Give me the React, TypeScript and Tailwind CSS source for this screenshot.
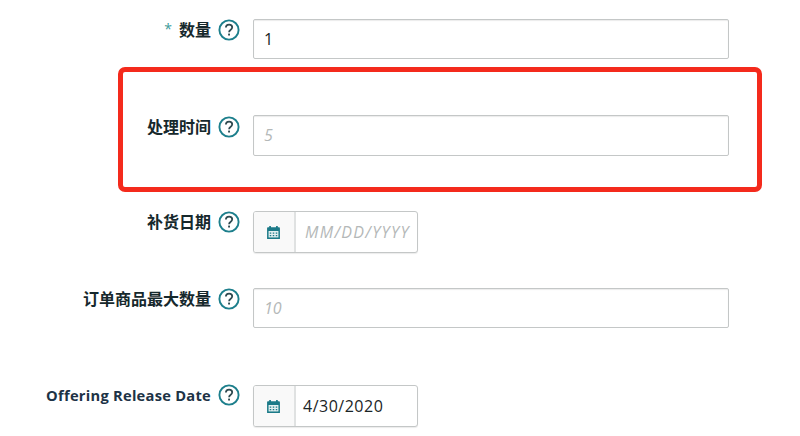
import React from "react";

const font = { fontFamily: '"Open Sans","Noto Sans CJK SC",sans-serif' };

function Help() {
  return (
    <svg width="22" height="22" viewBox="0 0 22 22" fill="none" className="shrink-0">
      <circle cx="11" cy="11" r="9.6" stroke="#1d7f8c" strokeWidth="1.9" />
      <path d="M7.9 8.6c0-1.9 1.4-3 3.2-3 1.8 0 3.1 1.1 3.1 2.7 0 1.3-.8 2-1.7 2.6-.9.6-1.4 1.1-1.4 2.3" stroke="#2f4a50" strokeWidth="1.8" />
      <rect x="10.1" y="14.6" width="1.9" height="1.9" fill="#2f4a50" />
    </svg>
  );
}

function Calendar() {
  return (
    <svg width="15" height="15" viewBox="0 0 14 14" className="shrink-0 mr-[2px]">
      <path d="M1 3.2c0-.6.4-1 1-1h1V1h1.6v1.2h4.8V1H11v1.2h1c.6 0 1 .4 1 1V13H1z" fill="#1b7a88" />
      <rect x="2.4" y="5.6" width="9.2" height="6" fill="#e4f0f1" />
      <path d="M3.5 7h1.4v1.2H3.5zM6.3 7h1.4v1.2H6.3zM9.1 7h1.4v1.2H9.1zM3.5 9.4h1.4v1.2H3.5zM6.3 9.4h1.4v1.2H6.3zM9.1 9.4h1.4v1.2H9.1z" fill="#1b7a88" />
    </svg>
  );
}

function Label({ children, cjk = true, star = false }: { children: React.ReactNode; cjk?: boolean; star?: boolean }) {
  return (
    <div className="w-[211px] flex justify-end items-center shrink-0 h-[22px]">
      {star && <span className="text-[14px] text-[#3c9a9a] mr-[7px] mt-[-3px]">*</span>}
      <span className={cjk ? "text-[16px] font-bold text-[#16282c] whitespace-nowrap" : "text-[14.7px] font-bold tracking-[0.25px] text-[#1d3346] whitespace-nowrap"}>
        {children}
      </span>
    </div>
  );
}

function TextInput({ value, placeholder, tall = false }: { value?: string; placeholder?: string; tall?: boolean }) {
  return (
    <div className={`w-[476px] ${tall ? "h-[41px]" : "h-[40px]"} border border-[#c4c7c7] rounded-[2px] bg-white flex items-center px-[10px] shadow-[inset_0_1px_1px_rgba(0,0,0,0.08)]`}>
      {value ? (
        <span className="text-[16px] text-[#1a2426]">{value}</span>
      ) : (
        <span className="text-[16px] italic text-[#b4b8b8] mt-[-1px]">{placeholder}</span>
      )}
    </div>
  );
}

function DateInput({ value, placeholder }: { value?: string; placeholder?: string }) {
  return (
    <div className="w-[165px] h-[42px] border border-[#c4c7c7] rounded-[3px] bg-white flex items-stretch overflow-hidden shadow-[0_1px_1px_rgba(0,0,0,0.08)]">
      <div className="w-[42px] bg-[#f9f9f9] border-r-2 border-[#e0e2e2] flex items-center justify-center shrink-0">
        <Calendar />
      </div>
      {value ? (
        <span className="flex items-center pl-[7px] text-[16px] tracking-[0.5px] text-[#1a2426] whitespace-nowrap">{value}</span>
      ) : (
        <span className="flex items-center pl-[9px] text-[16px] tracking-[1.3px] italic text-[#b4b8b8] whitespace-nowrap">{placeholder}</span>
      )}
    </div>
  );
}

function Row({ label, className, offset, children }: { label: React.ReactNode; className?: string; offset?: string; children: React.ReactNode }) {
  return (
    <div className={`flex items-start ${className ?? ""}`}>
      <div className={`flex shrink-0 ${offset ?? ""}`}>
        {label}
        <div className="ml-[7px] mr-[13px] shrink-0"><Help /></div>
      </div>
      {children}
    </div>
  );
}

export default function App() {
  return (
    <div className="relative w-[800px] h-[436px] bg-white overflow-hidden" style={font}>
      <div className="pt-[19px]">
        <Row label={<Label star>数量</Label>}>
          <TextInput value="1" />
        </Row>
        <Row label={<Label>处理时间</Label>} className="mt-[56px]" offset="mt-[1px]">
          <TextInput placeholder="5" tall />
        </Row>
        <Row label={<Label>补货日期</Label>} className="mt-[55px]">
          <DateInput placeholder="MM/DD/YYYY" />
        </Row>
        <Row label={<Label>订单商品最大数量</Label>} className="mt-[35px]">
          <TextInput placeholder="10" />
        </Row>
        <Row label={<Label cjk={false}>Offering Release Date</Label>} className="mt-[57px]" offset="mt-[-1px]">
          <DateInput value="4/30/2020" />
        </Row>
      </div>
      <div className="absolute left-[118px] top-[67px] w-[644px] h-[125px] border-[5px] border-[#f42a1c] rounded-[7px]" />
    </div>
  );
}
